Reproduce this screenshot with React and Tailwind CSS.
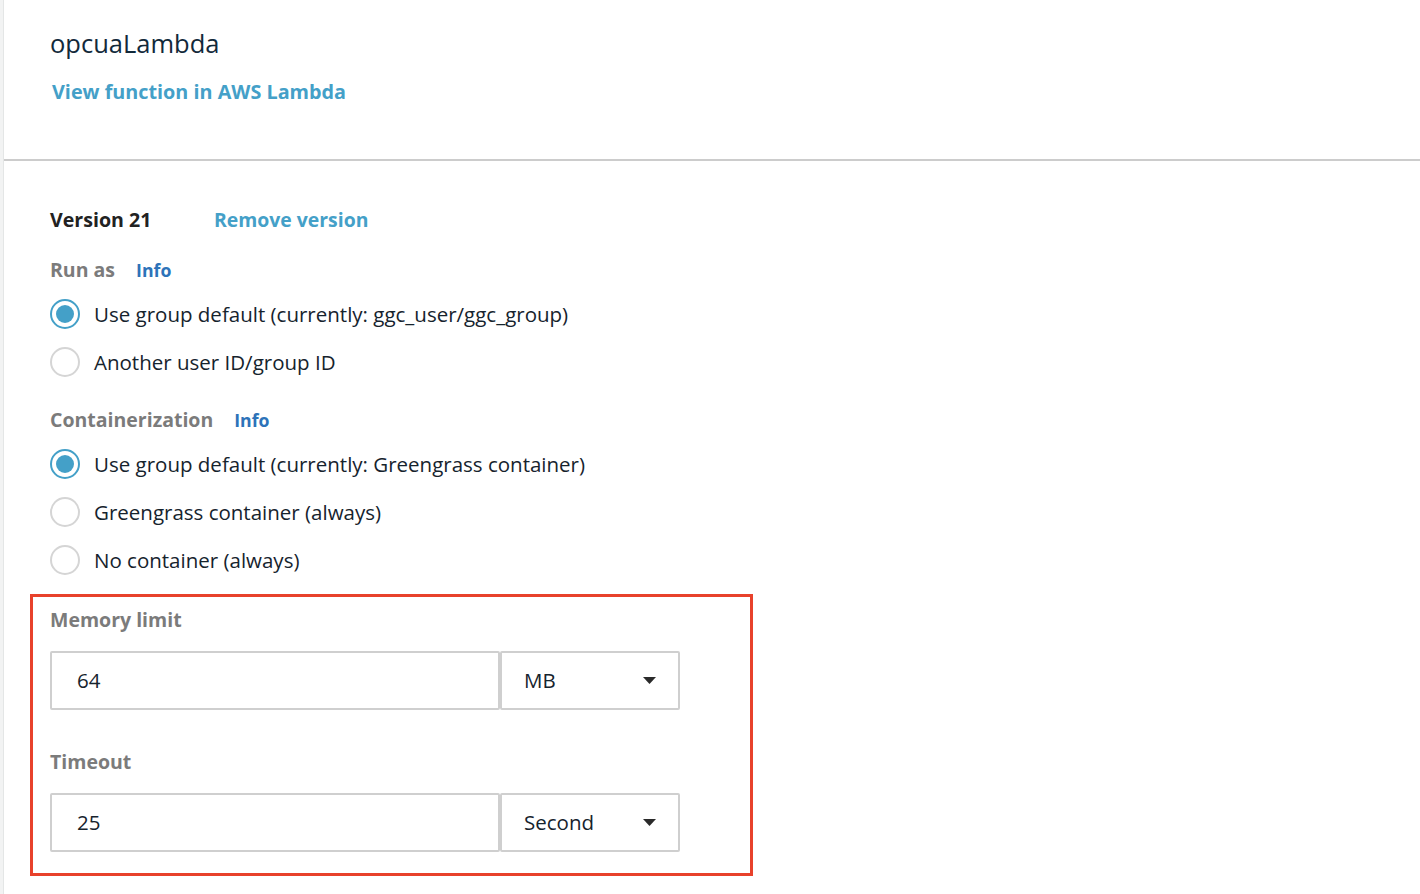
import React from "react";

const font = { fontFamily: '"Open Sans", "Noto Sans", sans-serif' };

function Radio({ checked, label }) {
  return (
    <div className="flex h-[48px] items-center">
      {checked ? (
        <span className="flex h-[30px] w-[30px] items-center justify-center rounded-full border-[2px] border-[#44a0c8] bg-white">
          <span className="h-[18px] w-[18px] rounded-full bg-[#44a0c8]" />
        </span>
      ) : (
        <span className="h-[30px] w-[30px] rounded-full border-[2px] border-[#d5d5d5] bg-white" />
      )}
      <span className="ml-[14px] text-[20.5px] text-[#16232d]">{label}</span>
    </div>
  );
}

function Label({ text, info }) {
  return (
    <div className="flex h-[28px] items-center">
      <span className="text-[19.5px] font-bold text-[#7b7b7b]">{text}</span>
      {info && (
        <span className="ml-[21px] text-[17.7px] font-bold text-[#2d73b9]">Info</span>
      )}
    </div>
  );
}

function Field({ value, unit }) {
  return (
    <div className="flex h-[59px]">
      <div className="flex w-[450px] items-center rounded-[2px] border-[2px] border-[#cfcfcf] pl-[25px] text-[20.5px] text-[#16232d]">
        {value}
      </div>
      <div className="flex w-[180px] items-center justify-between rounded-[2px] border-[2px] border-[#cfcfcf] pl-[22px] pr-[22px] text-[20.5px] text-[#16232d]">
        <span>{unit}</span>
        <svg width="13" height="7" viewBox="0 0 13 7">
          <path d="M0 0 H13 L6.5 7 Z" fill="#2a2a2a" />
        </svg>
      </div>
    </div>
  );
}

export default function App() {
  return (
    <div style={font} className="flex h-[894px] w-[1420px] overflow-hidden bg-white">
      <div className="w-[4px] border-r border-[#e4e6e6] bg-[#f2f3f3]" />
      <div className="flex flex-1 flex-col">
        <div className="h-[159px] pl-[46px] pt-[27px]">
          <div className="flex h-[32px] items-center text-[25.5px] text-[#12293a]">opcuaLambda</div>
          <div className="mt-[19px] flex h-[28px] items-center pl-[2px] text-[19.8px] font-bold text-[#44a0c8]">
            View function in AWS Lambda
          </div>
        </div>
        <div className="h-[2px] bg-[#cccccc]" />
        <div className="pl-[46px] pt-[45px]">
          <div className="flex h-[28px] items-center">
            <span className="w-[164px] text-[19.6px] font-bold text-[#222]">Version 21</span>
            <span className="text-[19.4px] font-bold text-[#44a0c8]">Remove version</span>
          </div>
          <div className="mt-[22px]">
            <Label text="Run as" info />
          </div>
          <div className="mt-[6px]">
            <Radio checked label="Use group default (currently: ggc_user/ggc_group)" />
            <Radio label="Another user ID/group ID" />
          </div>
          <div className="mt-[20px]">
            <Label text="Containerization" info />
          </div>
          <div className="mt-[6px]">
            <Radio checked label="Use group default (currently: Greengrass container)" />
            <Radio label="Greengrass container (always)" />
            <Radio label="No container (always)" />
          </div>
          <div className="-ml-[20px] mt-[10px] w-[723px] border-[3px] border-[#e8412b] pb-[21px] pl-[17px] pt-[9px]">
            <Label text="Memory limit" />
            <div className="mt-[17px]">
              <Field value="64" unit="MB" />
            </div>
            <div className="mt-[38px]">
              <Label text="Timeout" />
            </div>
            <div className="mt-[17px]">
              <Field value="25" unit="Second" />
            </div>
          </div>
        </div>
      </div>
    </div>
  );
}
